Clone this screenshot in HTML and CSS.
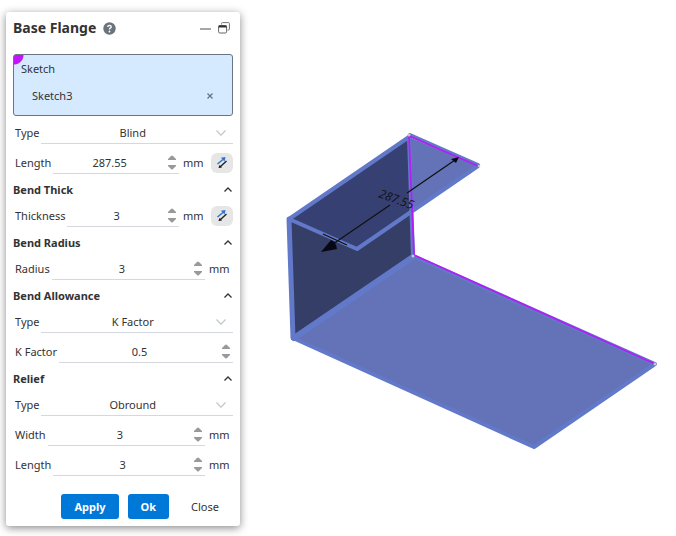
FILE: index.html
```html
<!DOCTYPE html>
<html lang="en">
<head>
<meta charset="utf-8">
<title>Base Flange</title>
<link rel="stylesheet" href="styles.css">
</head>
<body>
<svg class="symbols" aria-hidden="true">
  <symbol id="up" viewBox="0 0 8 5"><path d="M0 5V4L3 1Q4 0 5 1L8 4V5Z" fill="#999"/></symbol>
  <symbol id="down" viewBox="0 0 8 5"><path d="M0 0V1L3 4Q4 5 5 4L8 1V0Z" fill="#999"/></symbol>
  <symbol id="chevron-down" viewBox="0 0 10 6"><path d="M.5.5 5 5.2 9.5.5" fill="none" stroke="#c3c5ca" stroke-width="1.2"/></symbol>
  <symbol id="chevron-up" viewBox="0 0 8 5"><path d="M.5 4.5 4 1l3.500 3.500" fill="none" stroke="#333" stroke-width="1.3"/></symbol>
  <symbol id="flip" viewBox="0 0 12 12">
    <path d="M1.500 7 7 2.500" stroke="#2f75cf" stroke-width="1.500"/><path d="M9.500 0 8.600 4.500 4.800.7Z" fill="#2f75cf"/>
    <path d="M4.500 9.500 10.500 4" stroke="#222" stroke-width="1.400"/><path d="M2.500 11 3.500 8 6 10.600Z" fill="#111"/>
  </symbol>
</svg>
<main class="workspace">
  <form class="dialog">
    <header class="titlebar">
      <h1>Base Flange</h1>
      <button type="button" class="icon-button help" aria-label="Help"><svg width="13" height="13" viewBox="0 0 13 13"><circle cx="6.500" cy="6.500" r="6.200" fill="#6b737c"/><path d="M4.700 5Q4.800 3.400 6.500 3.400 8.200 3.400 8.200 4.900 8.200 5.700 7.200 6.200 6.500 6.600 6.500 7.600" fill="none" stroke="#fff" stroke-width="1.400"/><circle cx="6.500" cy="9.500" r=".9" fill="#fff"/></svg></button>
      <button type="button" class="icon-button" aria-label="Minimize"><svg width="11" height="12" viewBox="0 0 11 12"><path d="M0 7h11" stroke="#888" stroke-width="1.500"/></svg></button>
      <button type="button" class="icon-button" aria-label="Restore"><svg width="12" height="12" viewBox="0 0 12 12"><path d="M3.500 2.500V1.600Q3.500.6 4.500.6H10.400Q11.400.6 11.400 1.600V7Q11.400 8 10.400 8H9.500" fill="none" stroke="#777"/><rect x=".6" y="3.500" width="8" height="7.500" rx="1.200" fill="#fff" stroke="#666"/><path d="M.6 4.500H8.600" stroke="#333" stroke-width="2"/></svg></button>
    </header>
    <section class="picker">
      <h2>Sketch</h2>
      <div class="picked"><span>Sketch3</span><button type="button" class="icon-button" aria-label="Remove Sketch3"><svg width="6" height="6" viewBox="0 0 6 6"><path d="M.5.5 5.500 5.500M5.500.5.5 5.500" stroke="#667380" stroke-width="1.200"/></svg></button></div>
    </section>
    <div class="rows">
      <div class="row"><label for="type">Type</label><div class="field"><select id="type"><option>Blind</option></select><svg class="arrow"><use href="#chevron-down"/></svg></div></div>
      <div class="row"><label for="length">Length</label><div class="field"><input id="length" value="287.55"><div class="spin"><button type="button" aria-label="Increase length"><svg><use href="#up"/></svg></button><button type="button" aria-label="Decrease length"><svg><use href="#down"/></svg></button></div></div><span class="unit">mm</span><button type="button" class="flip" aria-label="Flip direction"><svg><use href="#flip"/></svg></button></div>
    </div>
    <section>
      <h2 class="section-title">Bend Thick<button type="button" class="icon-button" aria-label="Collapse Bend Thick"><svg><use href="#chevron-up"/></svg></button></h2>
      <div class="rows">
        <div class="row"><label for="thickness">Thickness</label><div class="field"><input id="thickness" value="3"><div class="spin"><button type="button" aria-label="Increase thickness"><svg><use href="#up"/></svg></button><button type="button" aria-label="Decrease thickness"><svg><use href="#down"/></svg></button></div></div><span class="unit">mm</span><button type="button" class="flip" aria-label="Flip thickness"><svg><use href="#flip"/></svg></button></div>
      </div>
    </section>
    <section>
      <h2 class="section-title">Bend Radius<button type="button" class="icon-button" aria-label="Collapse Bend Radius"><svg><use href="#chevron-up"/></svg></button></h2>
      <div class="rows">
        <div class="row"><label for="radius">Radius</label><div class="field"><input id="radius" value="3"><div class="spin"><button type="button" aria-label="Increase radius"><svg><use href="#up"/></svg></button><button type="button" aria-label="Decrease radius"><svg><use href="#down"/></svg></button></div></div><span class="unit">mm</span></div>
      </div>
    </section>
    <section>
      <h2 class="section-title">Bend Allowance<button type="button" class="icon-button" aria-label="Collapse Bend Allowance"><svg><use href="#chevron-up"/></svg></button></h2>
      <div class="rows">
        <div class="row"><label for="allowance">Type</label><div class="field"><select id="allowance"><option>K Factor</option></select><svg class="arrow"><use href="#chevron-down"/></svg></div></div>
        <div class="row"><label for="factor">K Factor</label><div class="field"><input id="factor" value="0.5"><div class="spin"><button type="button" aria-label="Increase K factor"><svg><use href="#up"/></svg></button><button type="button" aria-label="Decrease K factor"><svg><use href="#down"/></svg></button></div></div></div>
      </div>
    </section>
    <section>
      <h2 class="section-title">Relief<button type="button" class="icon-button" aria-label="Collapse Relief"><svg><use href="#chevron-up"/></svg></button></h2>
      <div class="rows">
        <div class="row"><label for="relief">Type</label><div class="field"><select id="relief"><option>Obround</option></select><svg class="arrow"><use href="#chevron-down"/></svg></div></div>
        <div class="row"><label for="relief-width">Width</label><div class="field"><input id="relief-width" value="3"><div class="spin"><button type="button" aria-label="Increase width"><svg><use href="#up"/></svg></button><button type="button" aria-label="Decrease width"><svg><use href="#down"/></svg></button></div></div><span class="unit">mm</span></div>
        <div class="row"><label for="relief-length">Length</label><div class="field"><input id="relief-length" value="3"><div class="spin"><button type="button" aria-label="Increase relief length"><svg><use href="#up"/></svg></button><button type="button" aria-label="Decrease relief length"><svg><use href="#down"/></svg></button></div></div><span class="unit">mm</span></div>
      </div>
    </section>
    <footer class="actions">
      <button type="button" class="primary">Apply</button>
      <button type="button" class="primary">Ok</button>
      <button type="button" class="plain">Close</button>
    </footer>
  </form>
  <svg class="model" viewBox="240 0 436 536" preserveAspectRatio="xMinYMin meet" role="img" aria-label="Flange model">
    <g stroke-linejoin="round" stroke-linecap="round">
      <path d="M293 338 413 256 655 364 534 447Z" fill="#6472b8" stroke="#6279c9" stroke-width="4"/>
      <path d="M289 219 409 137 413 256 293 338Z" fill="#343e67"/>
      <path d="M289 219 409 137 412 212 357 249Z" fill="#374073"/>
      <path d="M409 137 478 166 412 212Z" fill="#6472b8"/>
      <path d="M294 338 413 257" stroke="#6279c9" stroke-width="6"/>
      <path d="M289 219 293 338" stroke="#6279c9" stroke-width="5"/>
      <path d="M409 137 289 219 357 249 478 166" fill="none" stroke="#6279c9" stroke-width="4"/>
      <path d="M409 137 413 256" stroke="#6279c9" stroke-width="4"/>
      <path d="M410 135 478 165" stroke="#6279c9" stroke-width="4"/>
    </g>
    <path d="M478 166 409 136 414 255 655 364" fill="none" stroke="#b31ff3" stroke-width="1.800"/>
    <g fill="#c6c6d1"><circle cx="409" cy="135" r="1.500"/><circle cx="413" cy="256" r="1.500"/><circle cx="655" cy="364" r="1.500"/><circle cx="479" cy="166" r="1.300"/></g>
    <path d="M323 234 347 245M407 193 455 160M390 205 333 244" stroke="#111" stroke-width="1.300"/>
    <path d="M459 157 456 163 451 159Z" fill="#080812"/>
    <path d="M321 252 331 240Q336 242 337 249Z" fill="#080812"/>
    <text class="dimension" x="378" y="197" transform="rotate(20 378 197)">287.55</text>
  </svg>
</main>
</body>
</html>
```

FILE: styles.css
```css
* {
  box-sizing: border-box;
}

body {
  margin: 0;
  background: #fff;
  color: #333;
  font: 11px/16px "Noto Sans", "Open Sans", sans-serif;
}

button, input, select {
  margin: 0;
  padding: 0;
  border: 0;
  background: none;
  color: inherit;
  font: inherit;
}

h1, h2 {
  margin: 0;
  font-size: inherit;
}

svg {
  display: block;
}

.symbols {
  width: 0;
  height: 0;
  position: absolute;
}

.workspace {
  display: flex;
  align-items: flex-start;
}

.dialog {
  position: relative;
  flex: 0 0 234px;
  margin: 12px 0 10px 6px;
  padding: 0 7px 7px;
  border-radius: 3px;
  background: #fff;
  box-shadow: 0 2px 8px #0007;
}

.titlebar {
  display: flex;
  align-items: center;
  gap: 7px;
  height: 42px;
  padding: 0 3px 10px 0;
}

.titlebar h1 {
  font-size: 14px;
  line-height: 20px;
}

.help {
  margin-right: auto;
}

.picker {
  height: 62px;
  padding: 6px 7px;
  border: 1px solid #697583;
  border-radius: 3px;
  background: radial-gradient(circle at 0 0, #c414ff 9px, #d5e9ff 10px);
}

.picker h2 {
  font-weight: 400;
}

.picked {
  display: flex;
  justify-content: space-between;
  align-items: center;
  padding: 11px 12px 0 11px;
}

.rows {
  display: grid;
  gap: 8px;
}

.picker + .rows {
  padding-top: 6px;
}

.row {
  display: flex;
  align-items: center;
  height: 22px;
  padding-left: 2px;
}

.row label {
  margin-right: 2px;
}

.field {
  display: flex;
  flex: 1;
  align-items: center;
  height: 22px;
  min-width: 0;
  border-bottom: 1px solid #d6d8df;
}

.field input, .field select {
  flex: 1;
  width: 0;
  min-width: 0;
  height: 20px;
  text-align: center;
  text-align-last: center;
  appearance: none;
  outline: 0;
}

.field select {
  padding-left: 8px;
}

.field input {
  padding-right: 2px;
}

.arrow {
  width: 10px;
  height: 6px;
  margin-right: 7px;
}

.spin {
  display: grid;
  gap: 5px;
  width: 11px;
}

.spin svg {
  width: 8px;
  height: 5px;
}

.unit {
  width: 28px;
  padding-left: 4px;
}

.flip {
  display: grid;
  place-items: center;
  width: 22px;
  height: 20px;
  margin-left: 4px;
  border-radius: 6px;
  background: #e6e6e6;
}

.flip svg {
  width: 12px;
  height: 12px;
}

.section-title {
  display: flex;
  justify-content: space-between;
  align-items: center;
  height: 31px;
  padding-right: 1px;
}

.section-title svg {
  width: 8px;
  height: 5px;
}

.actions {
  display: flex;
  justify-content: flex-end;
  gap: 9px;
  padding-top: 18px;
}

.actions button {
  height: 25px;
  padding: 0 13px;
  border-radius: 3px;
}

.actions .plain {
  padding-right: 14px;
}

.actions .primary {
  background: #0078d8;
  color: #fff;
  font-weight: 700;
}

.model {
  flex: 1;
  min-width: 0;
}

.dimension {
  fill: #111;
  font: italic 12px "Open Sans", sans-serif;
}
```
